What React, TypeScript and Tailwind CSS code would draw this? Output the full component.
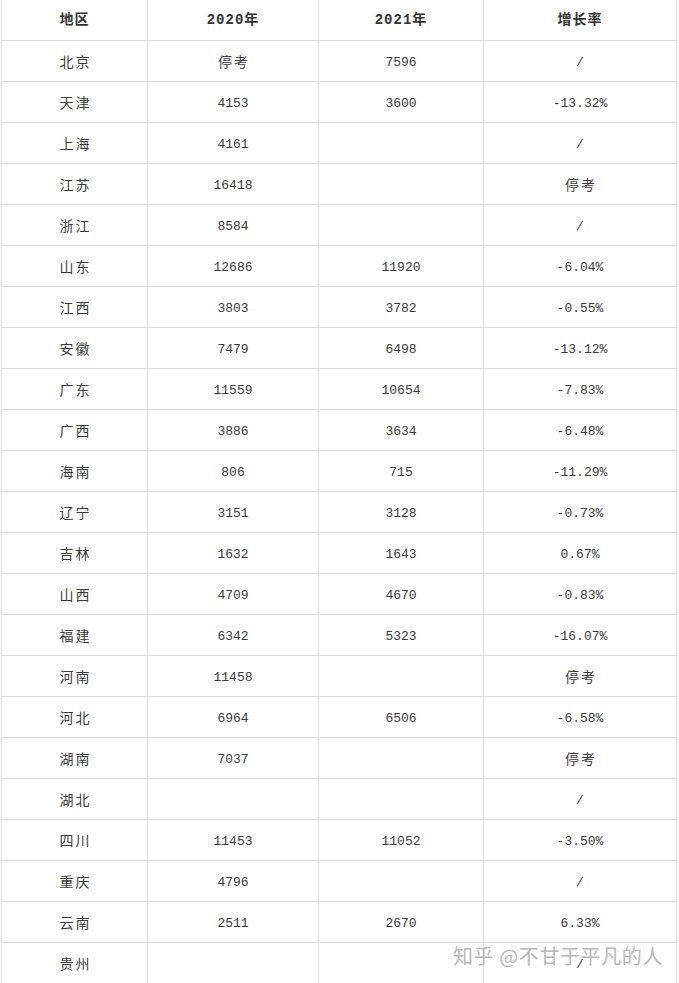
import React from "react";

const rows: string[][] = [
  ["北京", "停考", "7596", "/"],
  ["天津", "4153", "3600", "-13.32%"],
  ["上海", "4161", "", "/"],
  ["江苏", "16418", "", "停考"],
  ["浙江", "8584", "", "/"],
  ["山东", "12686", "11920", "-6.04%"],
  ["江西", "3803", "3782", "-0.55%"],
  ["安徽", "7479", "6498", "-13.12%"],
  ["广东", "11559", "10654", "-7.83%"],
  ["广西", "3886", "3634", "-6.48%"],
  ["海南", "806", "715", "-11.29%"],
  ["辽宁", "3151", "3128", "-0.73%"],
  ["吉林", "1632", "1643", "0.67%"],
  ["山西", "4709", "4670", "-0.83%"],
  ["福建", "6342", "5323", "-16.07%"],
  ["河南", "11458", "", "停考"],
  ["河北", "6964", "6506", "-6.58%"],
  ["湖南", "7037", "", "停考"],
  ["湖北", "", "", "/"],
  ["四川", "11453", "11052", "-3.50%"],
  ["重庆", "4796", "", "/"],
  ["云南", "2511", "2670", "6.33%"],
  ["贵州", "", "", "/"],
];

const cellCls = [
  "w-[147px] border-l border-r",
  "w-[171px] border-r",
  "w-[165px] border-r",
  "w-[193px] border-r",
];

function Cell(props: any) {
  const isCJK = /[\u4e00-\u9fff]/.test(props.text);
  return (
    <div
      className={`${cellCls[props.idx]} h-full border-[#dcdcdc] flex items-center justify-center shrink-0 text-[#3a3a3a]`}
    >
      {isCJK ? (
        <span className="text-[14px] tracking-[2px] pl-[2px] [font-family:'Noto_Sans_CJK_SC',sans-serif]">{props.text}</span>
      ) : (
        <span className="text-[13px] pt-[4px] [font-family:'Liberation_Mono',monospace]">{props.text}</span>
      )}
    </div>
  );
}

export default function App() {
  return (
    <div className="relative w-[679px] h-[983px] overflow-hidden bg-white">
      <div className="ml-px w-[676px]">
        <div className="flex h-[41px] border-b border-[#dcdcdc]">
          {["地区", "2020年", "2021年", "增长率"].map((h, i) => (
            <div
              key={h}
              className={`${cellCls[i]} h-full border-[#dcdcdc] flex items-center justify-center shrink-0 text-[#333] font-bold text-[14px] tracking-[1px] [font-family:'Liberation_Mono','Noto_Sans_CJK_SC',monospace]`}
            >
              {h}
            </div>
          ))}
        </div>
        {rows.map((r) => (
          <div key={r[0]} className="flex h-[41px] border-b border-[#dcdcdc]">
            {r.map((t, i) => (
              <Cell key={i} idx={i} text={t} />
            ))}
          </div>
        ))}
      </div>
      {/* watermark */}
      <div className="absolute left-[453px] top-[941px] text-[20px] tracking-[0.6px] text-[#b8b8b8] [font-family:'Noto_Sans_CJK_SC',sans-serif] [text-shadow:0_0_2px_#fff,0_0_2px_#fff] whitespace-nowrap">
        知乎 @不甘于平凡的人
      </div>
    </div>
  );
}
